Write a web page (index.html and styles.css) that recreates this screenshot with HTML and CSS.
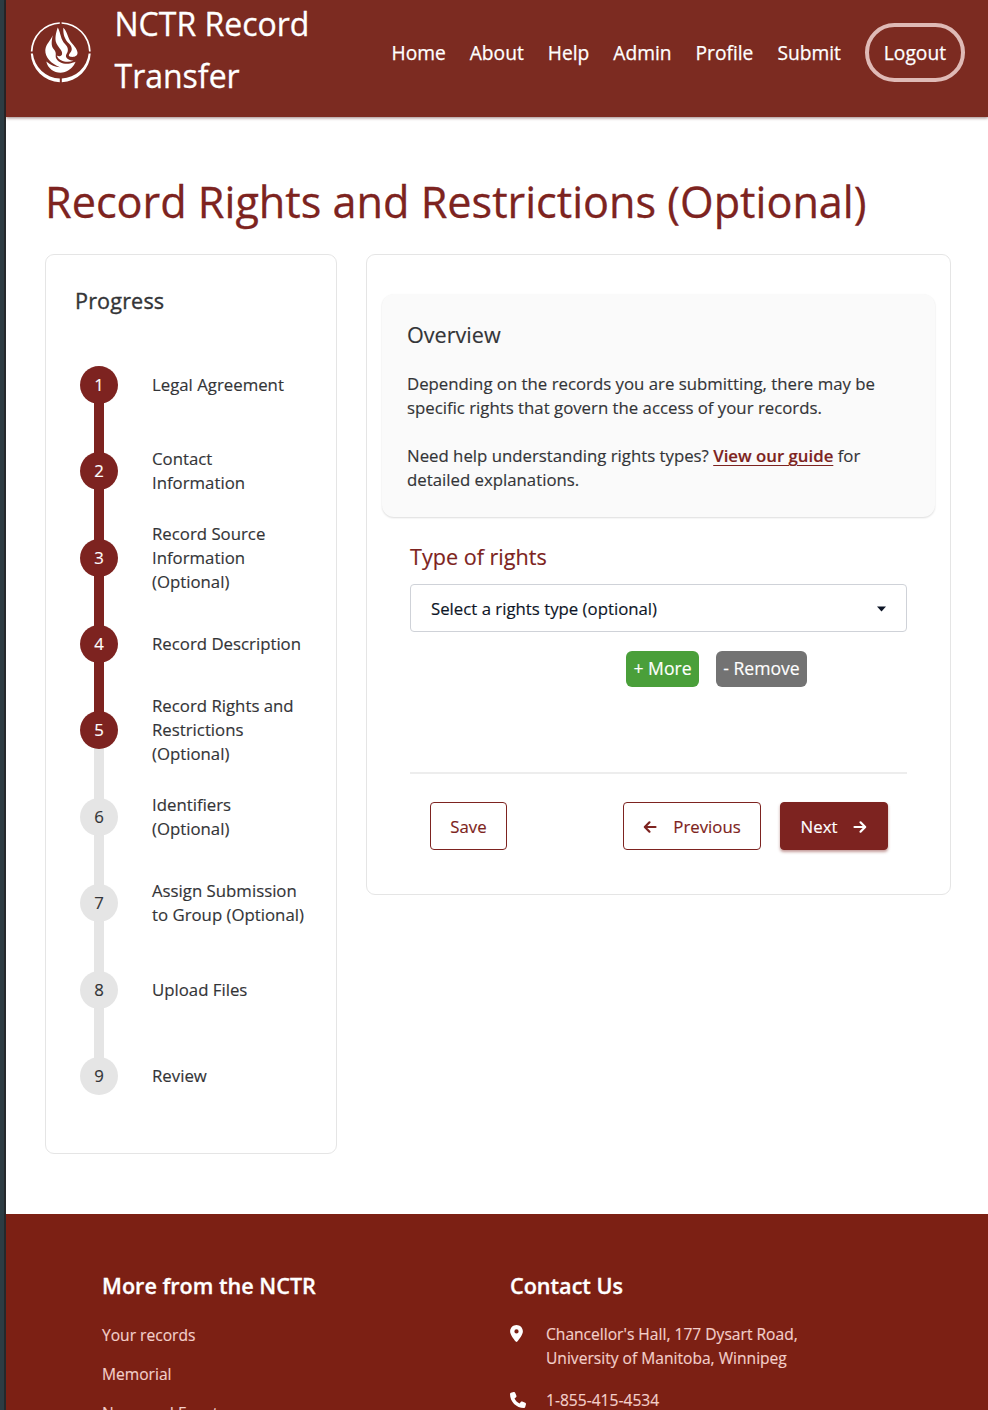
FILE: index.html
```html
<!DOCTYPE html>
<html lang="en">
<head>
<meta charset="utf-8">
<title>NCTR Record Transfer</title>
<link rel="stylesheet" href="styles.css">
</head>
<body>
<div class="page">
  <header class="header">
    <svg class="logo" viewBox="0 0 80 80">
      <g fill="#fff">
        <path d="M41.6 10.3A30 30 0 0 1 70.7 39.6L69 39.6A28.4 28.4 0 0 0 41.6 11.8ZM39.8 10.3A30 30 0 0 0 10.8 39.6L12.5 39.6A28.4 28.4 0 0 1 39.8 11.8Z"/>
        <path d="M10.8 41.5A30 30 0 0 0 39.8 70.2L39.8 66.4A27.6 27.6 0 0 1 12.9 41.5ZM70.7 41.5A30 30 0 0 1 41.8 70.2L41.8 66.4A27.6 27.6 0 0 0 68.6 41.5Z"/>
        <path d="M37.800 15.500C35.800 21 34.500 27 36.500 31.500C38.500 36 43 38.500 42 42.500C41.200 44.500 38.500 44.800 36.800 43.500C39 50 48 51 53.500 48.800C48 48 44.500 45.500 46.500 42C49 38.500 48 35 45 32C40.500 27.500 41 21.500 37.800 15.500Z"/>
        <path d="M43.300 15.800C43 22 44.500 27.500 49 31.500C52.500 35 52.500 38.500 50 41C48.200 43 48.500 44.500 50.500 44.800C54.500 45.300 57.800 44 57.500 40.500C57 36 53 33 50.500 29.500C47.500 25 47.500 20 43.300 15.800Z"/>
        <path d="M32.700 23.200C31.800 29 30.500 33.500 34 37.500C37 41 35 43.500 36 46C38 50.500 44 52.500 50 51.500C52.500 51 54 50.300 55.600 49.800C54 54 50 58.500 44 60.300C36 62 28 57.500 26.300 49.500C31 53.500 35 55 40 55.300C31 51.500 25 45.500 25.300 38C26 31.500 30.500 29 32.700 23.200Z"/>
      </g>
    </svg>
    <div class="brand">NCTR Record Transfer</div>
    <nav class="nav">
      <a>Home</a><a>About</a><a>Help</a><a>Admin</a><a>Profile</a><a>Submit</a>
      <a class="logout">Logout</a>
    </nav>
  </header>

  <main class="main">
    <h1 class="title">Record Rights and Restrictions (Optional)</h1>
    <div class="columns">
      <aside class="card progress">
        <h2 class="progress-title">Progress</h2>
        <ol class="steps">
          <li class="step done"><span class="dot">1</span><span>Legal Agreement</span></li>
          <li class="step done"><span class="dot">2</span><span>Contact Information</span></li>
          <li class="step done"><span class="dot">3</span><span>Record Source Information (Optional)</span></li>
          <li class="step done"><span class="dot">4</span><span>Record Description</span></li>
          <li class="step done"><span class="dot">5</span><span>Record Rights and Restrictions (Optional)</span></li>
          <li class="step"><span class="dot">6</span><span>Identifiers (Optional)</span></li>
          <li class="step"><span class="dot">7</span><span>Assign Submission to Group (Optional)</span></li>
          <li class="step"><span class="dot">8</span><span>Upload Files</span></li>
          <li class="step"><span class="dot">9</span><span>Review</span></li>
        </ol>
      </aside>

      <section class="card content">
        <div class="overview">
          <h2 class="overview-title">Overview</h2>
          <p>Depending on the records you are submitting, there may be specific rights that govern the access of your records.</p>
          <p>Need help understanding rights types? <a class="guide">View our guide</a> for detailed explanations.</p>
        </div>
        <div class="form">
          <div class="label">Type of rights</div>
          <div class="select"><span>Select a rights type (optional)</span>
            <svg class="caret" viewBox="0 0 9 6"><path d="M0 .5H9L4.500 5.500Z" fill="#0d1526"/></svg>
          </div>
          <div class="row-buttons">
            <button class="small more">+ More</button>
            <button class="small remove">- Remove</button>
          </div>
          <div class="actions">
            <button class="btn save">Save</button>
            <button class="btn previous"><svg class="arrow" viewBox="0 0 14 14"><path d="M6.500 2.300 1.800 7 6.500 11.700M2 7H12.500" /></svg>Previous</button>
            <button class="btn next">Next<svg class="arrow" viewBox="0 0 14 14"><path d="M7.500 2.300 12.200 7 7.500 11.700M12 7H1.500" /></svg></button>
          </div>
        </div>
      </section>
    </div>
  </main>

  <footer class="footer">
    <div class="footer-col">
      <h3>More from the NCTR</h3>
      <a>Your records</a>
      <a>Memorial</a>
      <a>News and Events</a>
    </div>
    <div class="footer-col">
      <h3>Contact Us</h3>
      <div class="contact">
        <svg class="pin" viewBox="0 0 384 512"><path fill="#fff" d="M215.700 499.200C267 435 384 279.400 384 192C384 86 298 0 192 0S0 86 0 192c0 87.400 117 243 168.300 307.200c12.300 15.300 35.100 15.300 47.400 0zM192 128a64 64 0 1 1 0 128 64 64 0 1 1 0-128z"/></svg>
        <span>Chancellor's Hall, 177 Dysart Road,<br>University of Manitoba, Winnipeg</span>
      </div>
      <div class="contact">
        <svg class="phone" viewBox="0 0 512 512"><path fill="#fff" d="M164.900 24.600c-7.700-18.600-28-28.500-47.400-23.200l-88 24C12.100 30.200 0 46 0 64C0 311.400 200.600 512 448 512c18 0 33.800-12.100 38.600-29.500l24-88c5.300-19.400-4.600-39.700-23.200-47.400l-96-40c-16.300-6.800-35.200-2.100-46.300 11.600L304.700 368C234.300 334.700 177.300 277.700 144 207.300L193.300 167c13.700-11.200 18.400-30 11.600-46.300l-40-96z"/></svg>
        <span>1-855-415-4534</span>
      </div>
    </div>
  </footer>
</div>
</body>
</html>
```

FILE: styles.css
```css
* { box-sizing: border-box; }
html, body { height: 1410px; overflow: hidden; }
body {
  margin: 0;
  font: 16.800px/24px "Open Sans", sans-serif;
  color: #333437;
  background: #fff;
  -webkit-text-stroke: .15px currentColor;
}
h1, h2, h3, p, ol { margin: 0; padding: 0; font-weight: 400; }
button { font: inherit; cursor: pointer; }

.page {
  height: 1410px;
  overflow: hidden;
  border-left: 4px solid #2d3c43;
  box-shadow: inset 2px 0 0 #25282b;
  padding-left: 2px;
  display: flex;
  flex-direction: column;
}

.header {
  flex: none;
  height: 117px;
  padding: 0 23px 12px 14px;
  display: flex;
  align-items: center;
  background: #7c2b21;
  color: #fff;
  box-shadow: 0 1px 3px rgba(60, 10, 10, .5);
}
.logo { width: 80px; height: 80px; margin-top: -2px; flex: none; }
.brand {
  width: 220px;
  margin: -6px 0 0 14.500px;
  font-size: 32px;
  line-height: 52px;
  -webkit-text-stroke: .3px currentColor;
}
.nav {
  margin-left: auto;
  display: flex;
  align-items: center;
  gap: 24px;
  font-size: 19.2px;
  -webkit-text-stroke: .25px currentColor;
}
.logout {
  height: 59px;
  padding: 0 15px;
  border: 4px solid #dfbab6;
  border-radius: 30px;
  line-height: 51px;
}

.main { flex: none; height: 1097px; padding: 53px 37px 0 39px; }
.title {
  height: 84px;
  font-size: 43.200px;
  line-height: 64px;
  color: #7d2320;
  white-space: nowrap;
  -webkit-text-stroke: .3px currentColor;
}
.columns { display: flex; gap: 29px; align-items: flex-start; }
.card { border: 1px solid #e5e5e5; border-radius: 9px; }

.progress { width: 292px; height: 900px; padding: 29px 29px 0; }
.progress-title { font-size: 21.600px; line-height: 34px; font-weight: 500; letter-spacing: .15px; -webkit-text-stroke: .35px currentColor; }
.steps { list-style: none; margin-top: 23.500px; }
.step {
  position: relative;
  height: 86.450px;
  display: grid;
  grid-template-columns: 38px 156px;
  column-gap: 34px;
  align-items: center;
  padding-left: 5px;
}
.step + .step::before {
  content: "";
  position: absolute;
  left: 19px;
  top: -43px;
  width: 10px;
  height: 86px;
  background: #e5e5e5;
}
.step.done + .done::before { background: #7d2320; }
.dot {
  position: relative;
  z-index: 1;
  width: 38px;
  height: 38px;
  border-radius: 50%;
  background: #e5e5e5;
  line-height: 38px;
  text-align: center;
}
.done .dot { background: #7d2320; color: #fff; }

.content { width: 585px; height: 641px; padding: 39px 15px 0; }
.overview {
  height: 223px;
  padding: 25px 25px 0;
  border-radius: 12px;
  background: #fafafa;
  box-shadow: 0 1px 2px rgba(0, 0, 0, .14);
}
.overview-title { font-size: 21.600px; line-height: 32px; margin-bottom: 21px; }
.overview p { margin-bottom: 24px; }
.guide { font-weight: 600; color: #7d2320; text-decoration: underline; text-underline-offset: 3px; text-decoration-thickness: 1px; }

.form { padding: 24px 28px 0; }
.label { font-size: 21.600px; line-height: 32px; color: #7d2320; }
.select {
  height: 48px;
  margin-top: 11px;
  padding: 2px 20px 0;
  display: flex;
  align-items: center;
  justify-content: space-between;
  border: 1px solid #cfd2d8;
  border-radius: 4px;
  color: #0d1526;
}
.caret { width: 9px; height: 6px; }
.row-buttons { margin-top: 19px; padding-right: 100px; display: flex; justify-content: flex-end; gap: 17px; }
.small { height: 36px; padding: 0 0 2px; border: 0; border-radius: 6px; color: #fff; font-size: 17.600px; }
.more { width: 73px; background: #4a9f3a; }
.remove { width: 91px; background: #737373; }
.actions {
  margin-top: 85px;
  padding: 28px 19px 0 20px;
  border-top: 2px solid #ededed;
  display: flex;
  gap: 19px;
}
.btn {
  height: 48px;
  padding: 2px 0 0;
  border: 1px solid #7d2320;
  border-radius: 4px;
  display: flex;
  align-items: center;
  justify-content: center;
  gap: 16px;
  background: #fff;
  color: #7d2320;
}
.save { width: 77px; margin-right: auto; }
.previous { width: 138px; }
.next { width: 108px; background: #7d2320; color: #fff; box-shadow: 0 2px 3px rgba(125, 35, 32, .45); }
.arrow { width: 14px; height: 14px; fill: none; stroke: currentColor; stroke-width: 2.200; stroke-linecap: round; stroke-linejoin: round; }

.footer {
  flex: none;
  height: 240px;
  padding: 56px 96px 0;
  display: grid;
  grid-template-columns: 408px 1fr;
  background: #7c2014;
  color: #f3cfca;
  font-size: 15.600px;
}
.footer-col { display: flex; flex-direction: column; }
.footer h3 { font-size: 21.600px; line-height: 32px; font-weight: 600; color: #fff; margin-bottom: 21px; -webkit-text-stroke: .3px currentColor; }
.footer a { margin-bottom: 15px; }
.contact { display: flex; margin: -1px 0 19px; }
.contact svg { margin-right: 20px; flex: none; }
.pin { width: 13px; height: 17px; box-sizing: content-box; padding: 3px 3px 0 0; }
.phone { width: 16px; height: 16px; margin-top: 4px; }
```
